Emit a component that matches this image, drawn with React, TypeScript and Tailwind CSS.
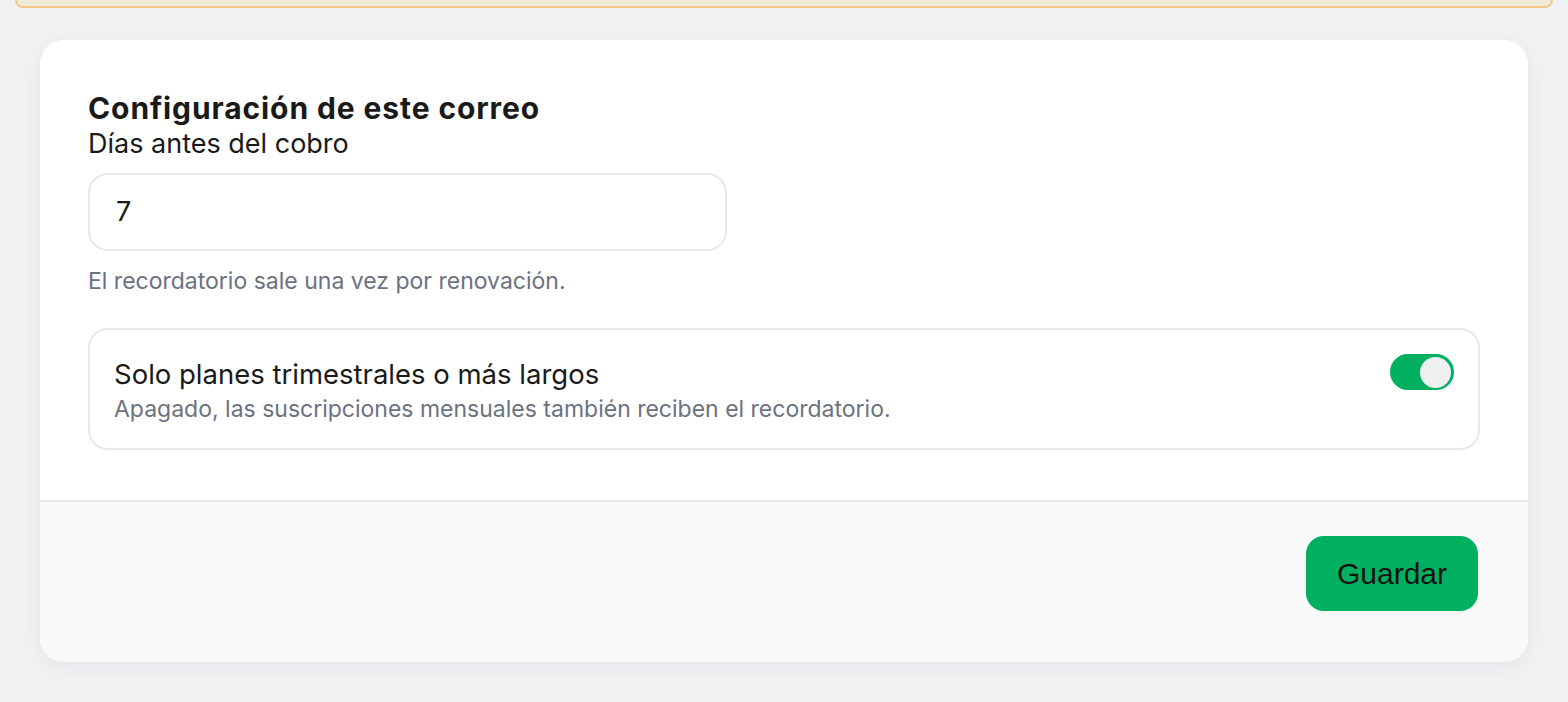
import React from 'react';

const App: React.FC = () => {
  return (
    <div className="min-h-[702px] bg-[#f1f2f4] px-10 pb-10" style={{ fontFamily: 'Inter, "Noto Sans", sans-serif' }}>
      <div className="-mx-[25px] h-[8px] rounded-b-[14px] border-x-2 border-b-2 border-[#f3c98c] bg-[#f1ebdc]" />

      <div className="mt-[32px] overflow-hidden rounded-[24px] bg-white shadow-[0_4px_24px_rgba(15,23,42,0.06)]">
        <div className="px-12 pb-[50px] pt-[50px]">
          <h2 className="text-[30px] font-bold leading-[36px] tracking-[0.9px] text-[#1a1a1a]">Configuración de este correo</h2>
          <label className="block text-[27px] leading-[36px] text-[#1a1a1a]">Días antes del cobro</label>
          <div className="mt-[11px] flex h-[78px] w-[639px] items-center rounded-[20px] border-2 border-[#e7e8ea] px-[26px] text-[27px] text-[#1a1a1a]">
            7
          </div>
          <p className="mt-[15px] text-[23px] leading-[30px] text-[#6b7280]">El recordatorio sale una vez por renovación.</p>

          <div className="mt-[32px] flex items-start justify-between rounded-[20px] border-2 border-[#e7e8ea] px-6 pb-[24px] pt-[24px]">
            <div>
              <div className="text-[27.5px] leading-[40px] text-[#1a1a1a]">Solo planes trimestrales o más largos</div>
              <div className="text-[23px] leading-[30px] text-[#6b7280]">Apagado, las suscripciones mensuales también reciben el recordatorio.</div>
            </div>
            <button className="flex h-[36px] w-[64px] items-center justify-end rounded-full border-2 border-[#00b060] bg-[#00b060] pr-[1px]">
              <span className="h-[31px] w-[31px] rounded-full bg-[#eef0f1]" />
            </button>
          </div>
        </div>

        <div className="flex justify-end border-t-2 border-[#e7e8ea] bg-[#f9f9f9] px-[50px] pb-[51px] pt-[34px]">
          <button
            className="flex h-[75px] w-[172px] items-center justify-center rounded-[18px] bg-[#00b061] text-[30px] text-[#111]"
            style={{ fontFamily: '"Liberation Sans", Arial, sans-serif' }}
          >
            Guardar
          </button>
        </div>
      </div>
    </div>
  );
};

export default App;
